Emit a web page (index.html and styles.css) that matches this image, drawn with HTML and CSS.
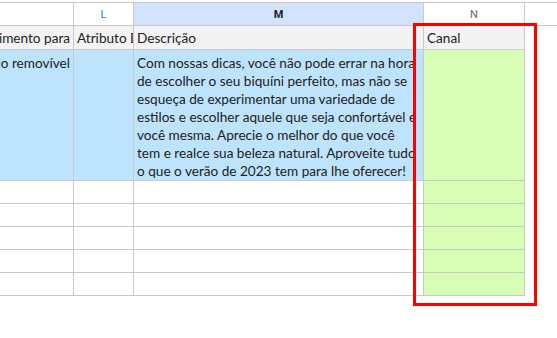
FILE: index.html
```html
<!DOCTYPE html>
<html lang="pt">
<head>
    <meta charset="UTF-8">
    <meta name="viewport" content="width=device-width, initial-scale=1.0">
    <title>Planilha - Canal</title>
    <link rel="stylesheet" href="styles.css">
</head>
<body>
    <div class="sheet">
        <!-- cabeçalho das colunas -->
        <div class="colhead"></div>
        <div class="colhead letter-l">L</div>
        <div class="colhead selected">M</div>
        <div class="colhead">N</div>
        <div class="colhead last"></div>

        <!-- linha de títulos -->
        <div class="cell title clip-left"><span>Comprimento para</span></div>
        <div class="cell title clip">Atributo Desconto</div>
        <div class="cell title">Descrição</div>
        <div class="cell title">Canal</div>
        <div class="cell empty"></div>

        <!-- linha com descrição -->
        <div class="cell blue top clip-left"><span>Bojo removível</span></div>
        <div class="cell blue"></div>
        <div class="cell blue top text">Com nossas dicas, você não pode errar na hora<br>de escolher o seu biquíni perfeito, mas não se<br>esqueça de experimentar uma variedade de<br>estilos e escolher aquele que seja confortável e<br>você mesma. Aprecie o melhor do que você<br>tem e realce sua beleza natural. Aproveite tudo<br>o que o verão de 2023 tem para lhe oferecer!</div>
        <div class="cell green"></div>
        <div class="cell empty"></div>

        <div class="cell"></div><div class="cell"></div><div class="cell"></div><div class="cell green"></div><div class="cell empty"></div>
        <div class="cell"></div><div class="cell"></div><div class="cell"></div><div class="cell green"></div><div class="cell empty"></div>
        <div class="cell"></div><div class="cell"></div><div class="cell"></div><div class="cell green"></div><div class="cell empty"></div>
        <div class="cell"></div><div class="cell"></div><div class="cell"></div><div class="cell green"></div><div class="cell empty"></div>
        <div class="cell"></div><div class="cell"></div><div class="cell"></div><div class="cell green"></div><div class="cell empty"></div>
    </div>

    <div class="callout"></div>
</body>
</html>
```

FILE: styles.css
```css
body {
    margin: 0;
    background: #fff;
    font-family: Lato, "Open Sans", sans-serif;
    color: #222;
}
.sheet {
    display: grid;
    grid-template-columns: 74px 60px 290px 101px 1fr;
    grid-template-rows: 23px 24px 131px repeat(5, 23px);
    margin-top: 2px;
    border-top: 1px solid #c9c9c9;
}
.colhead {
    display: flex;
    align-items: center;
    justify-content: center;
    font-family: Roboto, Arial, sans-serif;
    font-size: 11px;
    color: #666;
    border-right: 1px solid #c9c9c9;
    border-bottom: 1px solid #c9c9c9;
    box-sizing: border-box;
}
.colhead.letter-l {
    color: #2f78bd;
}
.colhead.selected {
    background: #d3e3fd;
    color: #1f1f1f;
    font-weight: bold;
}
.colhead.last {
    border-right: none;
}
.cell {
    display: flex;
    align-items: center;
    padding: 0 3px;
    font-size: 13.6px;
    line-height: 18px;
    white-space: nowrap;
    border-right: 1px solid #c9c9c9;
    border-bottom: 1px solid #c9c9c9;
    box-sizing: border-box;
    min-width: 0;
}
.cell.title {
    background: #f3f3f3;
}
.cell.blue {
    background: #bee3fc;
}
.cell.green {
    background: #d8fdb4;
}
.cell.top {
    align-items: flex-start;
    padding-top: 4px;
}
.cell.clip {
    overflow: hidden;
}
.cell.clip-left {
    overflow: hidden;
    justify-content: flex-end;
}
.cell.text {
    display: block;
    overflow: visible;
    z-index: 1;
}
.cell.empty {
    border: none;
}
.callout {
    position: absolute;
    z-index: 2;
    left: 413px;
    top: 23px;
    width: 124px;
    height: 283px;
    box-sizing: border-box;
    border: 3px solid #f00;
}
```
